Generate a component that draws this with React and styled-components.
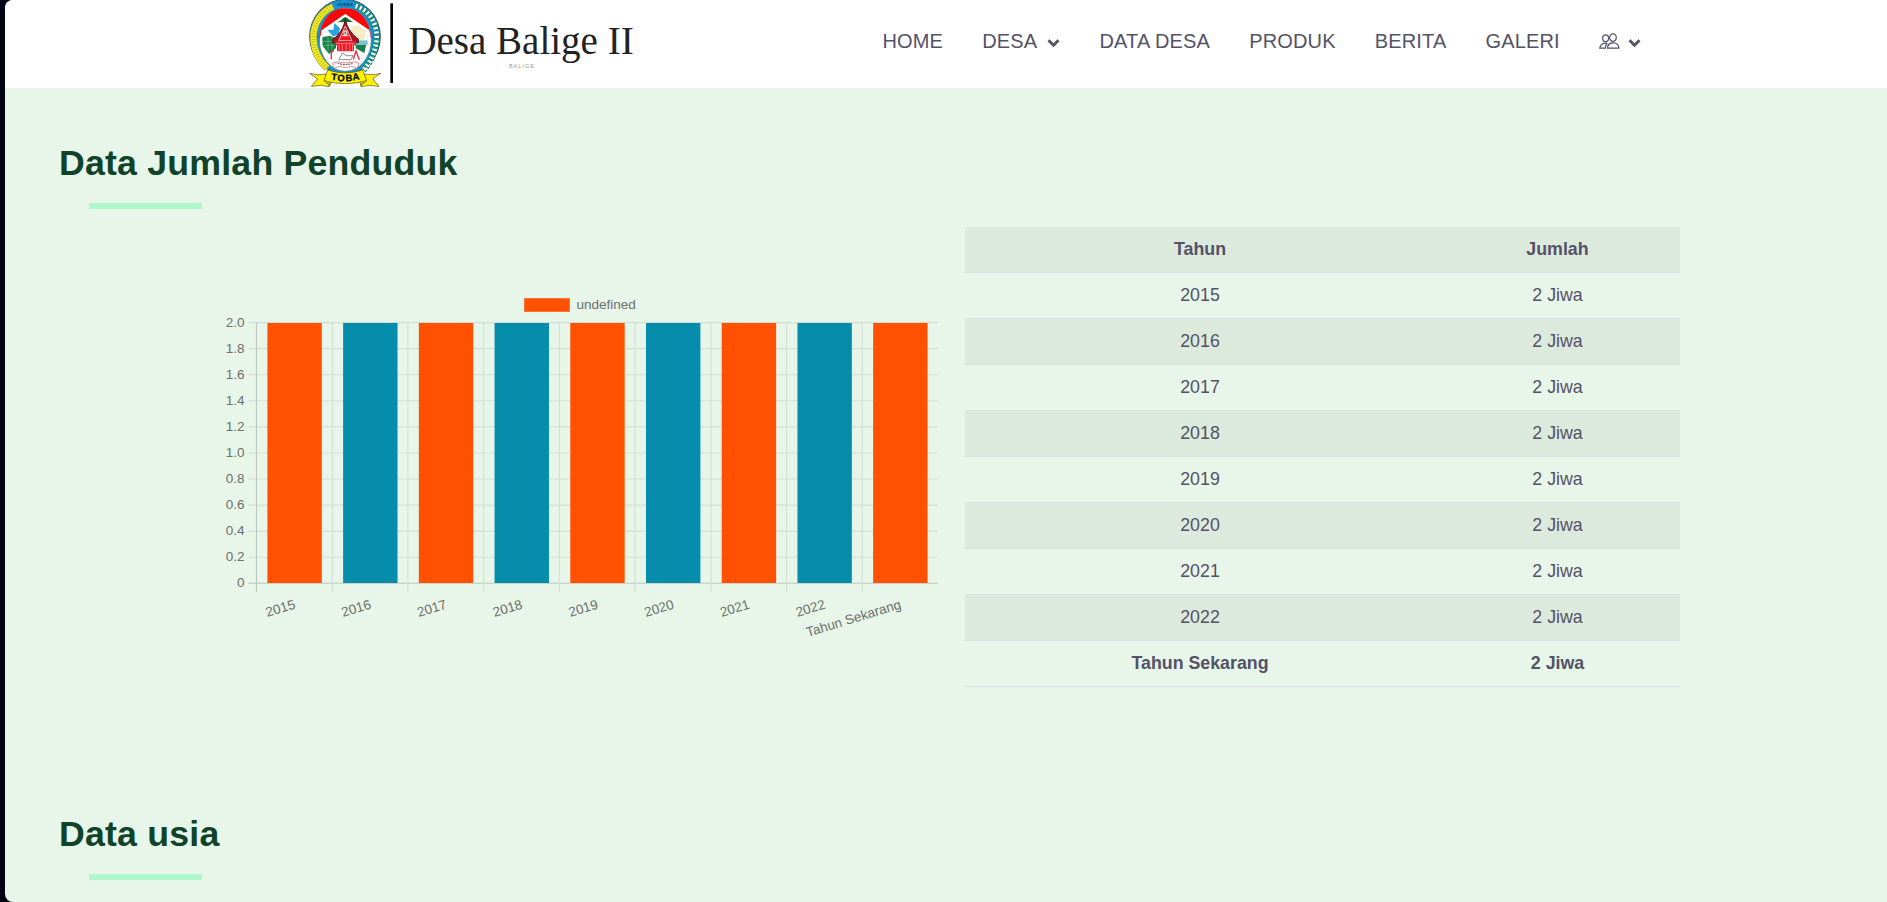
import React from "react";
import styled, { createGlobalStyle } from "styled-components";

const GlobalStyle = createGlobalStyle`
  * { box-sizing: border-box; }
  body {
    margin: 0;
    background: #020414;
    color: #535266;
    font-family: "Liberation Sans", Arial, sans-serif;
    overflow: hidden;
  }
`;

const Page = styled.div`
  height: 902px;
  margin-left: 5px;
  background: #e8f5e9;
  border-radius: 8px 0 0 8px;
  overflow: hidden;
`;

const Header = styled.header`
  height: 88px;
  background: #fff;
  display: flex;
  justify-content: space-between;
  align-items: flex-start;
  padding: 0 246px 0 295px;
`;

const Brand = styled.div`
  display: flex;
`;

const BrandText = styled.div`
  width: 226px;
  margin-left: 8px;
  padding-top: 18px;
  text-align: center;
`;

const BrandName = styled.div`
  font: 39px/46px "Liberation Serif", "Times New Roman", serif;
  color: #222;
  white-space: nowrap;
`;

const BrandPlace = styled.div`
  font-size: 5.6px;
  line-height: 6px;
  margin-top: -1px;
  padding-left: 2px;
  letter-spacing: 1px;
  color: #999;
`;

const Nav = styled.nav`
  display: flex;
  gap: 39.2px;
  padding-top: 29px;
`;

const NavItem = styled.a`
  display: flex;
  align-items: center;
  gap: ${(p) => p.$gap || 0}px;
  font-size: 20px;
  letter-spacing: 0.14px;
  line-height: 24px;
  white-space: nowrap;
`;

const Section = styled.section`
  height: 671px;
  padding: 54px 0 0 54px;
`;

const Title = styled.h2`
  margin: 0;
  font-size: 35.7px;
  line-height: 42px;
  letter-spacing: 0.2px;
  color: #10432a;
`;

const Underline = styled.div`
  width: 113px;
  height: 6px;
  margin: 19px 0 18px 30px;
  background: #aef7c9;
`;

const Columns = styled.div`
  display: flex;
  align-items: flex-start;
  padding-left: 151px;
`;

const ChartArea = styled.div`
  width: 755px;
  padding-top: 63px;
`;

const Table = styled.table`
  width: 715px;
  border-collapse: collapse;
  table-layout: fixed;
  font-size: 17.8px;
  text-align: center;
`;

const Row = styled.tr`
  height: 46px;
  background: ${(p) => (p.$striped ? "#dce9dd" : "transparent")};
  font-weight: ${(p) => (p.$bold ? 700 : 400)};
  box-shadow: inset 0 -1px #dadfe5;
`;

const Cell = styled.td`
  padding: 0 2px 2px 0;
  width: ${(p) => p.$width}px;
`;

const YEARS = ["2015", "2016", "2017", "2018", "2019", "2020", "2021", "2022", "Tahun Sekarang"];
const TICKS = ["2.0", "1.8", "1.6", "1.4", "1.2", "1.0", "0.8", "0.6", "0.4", "0.2", "0"];

function Chevron() {
  return (
    <svg width="13" height="10" viewBox="0 0 13 10" style={{ marginTop: 4 }}>
      <path d="M1.5 2.2 6.5 7.2l5-5" fill="none" stroke="#535266" strokeWidth="3" />
    </svg>
  );
}

function People() {
  return (
    <svg width="21" height="17" viewBox="0 0 21 17" fill="none" stroke="#535266" strokeWidth="1.25">
      <ellipse cx="14" cy="4.6" rx="3.3" ry="3.7" />
      <path d="M8.6 15.1c0-3.1 2.2-5.2 5.5-5.2s5.7 2.1 5.7 5.2z" />
      <ellipse cx="6.6" cy="5.2" rx="3" ry="3.4" />
      <path d="M7.8 10.2C4 9.6 1 11.7.8 15.1h5.6c0-1.9.6-3.5 1.9-4.8" />
    </svg>
  );
}

function Emblem() {
  const ring = "M167 18C205 30 229 64 230 108 229 150 214 184 190 210";
  const wreath = "M99 20C65 34 41 68 40 112c1 36 14 68 42 92";
  return (
    <svg width="100" height="88" viewBox="0 0 300 264">
      <ellipse cx="135" cy="110" rx="106" ry="112" fill="#1593d5" stroke="#35515a" strokeWidth="3" />
      <path d={wreath} fill="none" stroke="#8b9320" strokeWidth="21" />
      <path d={wreath} fill="none" stroke="#f0ea28" strokeWidth="18" />
      <path d={wreath} fill="none" stroke="#b5ad20" strokeWidth="12" strokeDasharray="2 6" />
      <path d={ring} fill="none" stroke="#0d8440" strokeWidth="19" strokeDasharray="9 4" />
      <path d={ring} fill="none" stroke="#fff" strokeWidth="14" strokeDasharray="6 7" />
      <text x="135" y="18" fontSize="13" fontWeight="700" textAnchor="middle" fill="#18445b">HORAS</text>
      <ellipse cx="136" cy="119" rx="78" ry="95" fill="#fff" stroke="#477284" strokeWidth="2" />
      <path d="M58 121C60 65 90 25 136 25s76 40 78 96l-6-31-72-48-70 48z" fill="#f80808" />
      <path d="M65 92 136 43l71 49-22 96H86z" fill="#fff" stroke="#ccc" />
      <path d="M67 112l21-5 20 7v30l-21 18-19-24z" fill="#168142" />
      <path d="M68 124h38M72 136h31M84 109v43M96 110v38" stroke="#73c295" strokeWidth="2" />
      <path d="M167 122h34l-8 37-26-14z" fill="#168142" />
      <path d="M167 122h36v13h-37z" fill="#78c2d6" />
      <path d="M103 69l-3 20-18 1 17 19 17-5 4-19z" fill="#2aa4e0" />
      <path d="M154 80l23-5 9 11 14 7-7 26-20 2-11-18-10-6z" fill="#f5edc5" />
      <path d="M111 67c16-6 17-15 25-15s10 9 24 14z" fill="#16723a" />
      <path d="M136 54c2 25 17 46 39 64v10H97v-9c24-16 36-39 39-65z" fill="#a61420" stroke="#4e151c" strokeWidth="3" />
      <path d="M136 78l20 44h-40z" fill="#f01c25" stroke="#fff" strokeWidth="2" />
      <path d="M127 107h18M132 93h8v10h-8z" stroke="#fff" strokeWidth="3" fill="none" />
      <path d="M105 124h63v12h-6v18h-51v-18h-6z" fill="#ef1724" />
      <path d="M108 130h57M117 132v21M127 132v21M138 132v21M149 132v21M158 132v21" stroke="#fff" strokeWidth="1.3" />
      <path d="M117 177l11-18 10 8h21l-6 12h-37" fill="#fff" stroke="#535353" strokeWidth="2" />
      <path d="M94 178v-22l8-4M160 178l8-25 10 26" fill="none" stroke="#ed2534" strokeWidth="4" />
      <path d="M98 190l16-5c15 5 32 5 48 0l15 5-5 15-17-6c-12 4-25 4-37 0l-17 6z" fill="#fff" stroke="#d25c60" strokeWidth="2" />
      <path d="M113 190q24 7 47 0" fill="none" stroke="#333" strokeWidth="3" strokeDasharray="5 3" />
      <path d="M29 220q22 8 49 2l10 38q-25-7-54-1l19-22zM242 220q-22 8-49 2l-10 38q25-7 54-1l-19-22z" fill="#ffee05" stroke="#554f13" strokeWidth="2" />
      <path d="M83 210q53 17 105 0l12 32q-64 18-128 0z" fill="#fff200" stroke="#554f13" strokeWidth="2" />
      <path d="M72 242l18 15 2-11M200 242l-18 15-2-11" fill="#c7be0b" stroke="#554f13" strokeWidth="2" />
      <g fontSize="28" fontWeight="700" fill="#080808" stroke="#080808" strokeWidth="1">
        <text transform="translate(93 239) rotate(7)">T</text>
        <text transform="translate(112 243) rotate(3)">O</text>
        <text transform="translate(137 244) rotate(-3)">B</text>
        <text transform="translate(159 241) rotate(-8)">A</text>
      </g>
      <path d="M271 10h8v239h-8z" fill="#000" />
    </svg>
  );
}

function PopulationChart() {
  const step = 75.72;
  const left = 46.5;
  const bottom = 293.3;
  return (
    <svg width="745" height="360" viewBox="0 0 745 360" fontSize="13.5" fill="#6b706b">
      <rect x="314.5" y="8.5" width="45" height="13" fill="#ff5100" stroke="#f97436" />
      <text x="366.5" y="19">undefined</text>
      {TICKS.map((tick, i) => (
        <g key={tick}>
          <path d={`M38 ${32.6 + i * 26.07}H728`} stroke={i === 10 ? "#bdc9be" : "#d3dfd4"} strokeWidth="1.1" />
          <text x="34.5" y={37 + i * 26} textAnchor="end">{tick}</text>
        </g>
      ))}
      {YEARS.map((year, i) => {
        const x = left + i * step;
        return (
          <g key={year}>
            <path d={`M${x} 32.6V302.3`} stroke={i === 0 ? "#bdc9be" : "#d3dfd4"} strokeWidth="1.1" />
            <rect x={x + 10.9} y="33" width="54.4" height={bottom - 33.3} fill={i % 2 ? "#058dab" : "#ff5100"} />
            <text transform={`translate(${x + step / 2 + 0.4} 313.8) rotate(-17)`} textAnchor="end" dy="4.6">{year}</text>
          </g>
        );
      })}
    </svg>
  );
}

export default function App() {
  return (
    <>
      <GlobalStyle />
      <Page>
        <Header>
          <Brand>
            <Emblem />
            <BrandText>
              <BrandName>Desa Balige II</BrandName>
              <BrandPlace>BALIGE</BrandPlace>
            </BrandText>
          </Brand>
          <Nav>
            <NavItem>HOME</NavItem>
            <NavItem $gap={10}>DESA<Chevron /></NavItem>
            <NavItem>DATA DESA</NavItem>
            <NavItem>PRODUK</NavItem>
            <NavItem>BERITA</NavItem>
            <NavItem>GALERI</NavItem>
            <NavItem $gap={8}><People /><Chevron /></NavItem>
          </Nav>
        </Header>
        <Section>
          <Title>Data Jumlah Penduduk</Title>
          <Underline />
          <Columns>
            <ChartArea><PopulationChart /></ChartArea>
            <Table>
              <thead>
                <Row $striped $bold>
                  <Cell as="th" $width={472}>Tahun</Cell>
                  <Cell as="th" $width={243}>Jumlah</Cell>
                </Row>
              </thead>
              <tbody>
                {YEARS.map((year, i) => (
                  <Row key={year} $striped={i % 2 === 1} $bold={i === 8}>
                    <Cell>{year}</Cell>
                    <Cell>2 Jiwa</Cell>
                  </Row>
                ))}
              </tbody>
            </Table>
          </Columns>
        </Section>
        <Section>
          <Title>Data usia</Title>
          <Underline />
        </Section>
      </Page>
    </>
  );
}
